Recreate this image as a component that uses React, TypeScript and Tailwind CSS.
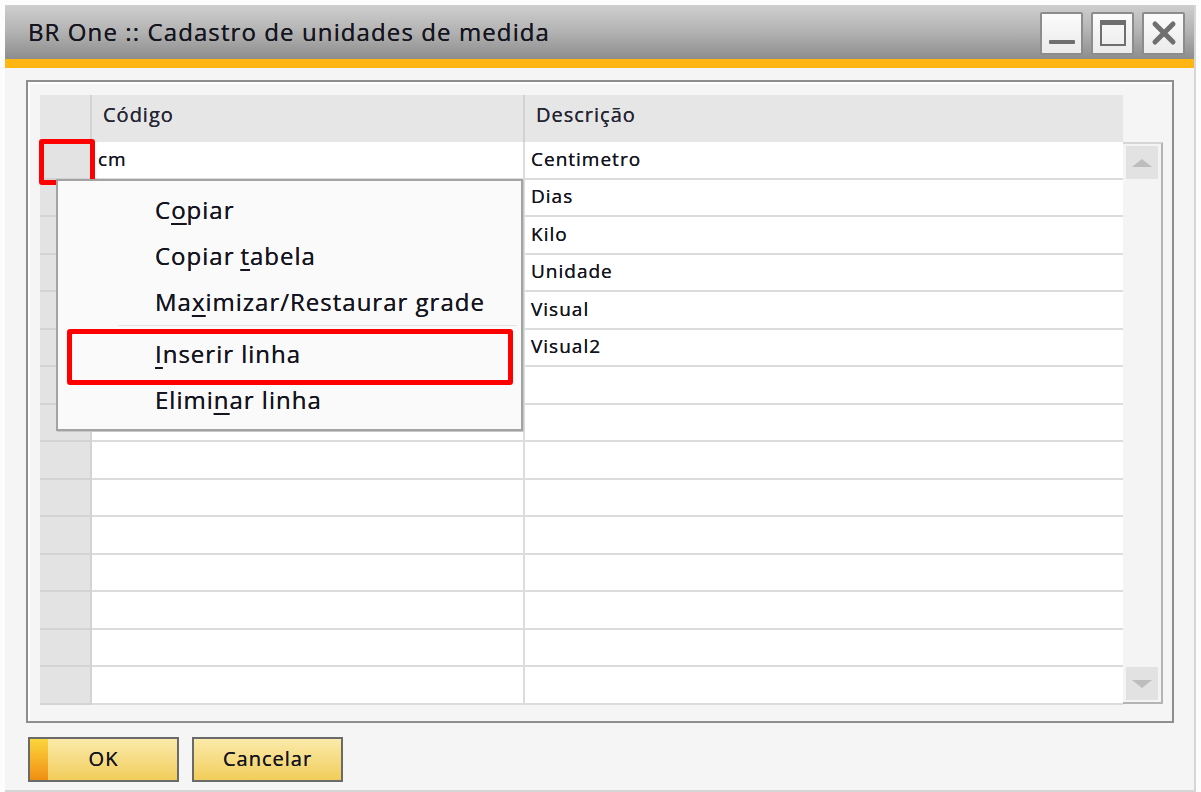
import React from "react";

const rows = [
  { code: "cm", desc: "Centimetro" },
  { code: "", desc: "Dias" },
  { code: "", desc: "Kilo" },
  { code: "", desc: "Unidade" },
  { code: "", desc: "Visual" },
  { code: "", desc: "Visual2" },
  ...Array.from({ length: 9 }, () => ({ code: "", desc: "" })),
];

const font = { fontFamily: '"Open Sans", "Noto Sans", sans-serif' };

function TitleButton({ children }: { children: React.ReactNode }) {
  return (
    <div className="flex h-[43px] w-[43px] items-center justify-center rounded-[2px] border-2 border-[#8c8c8c] bg-gradient-to-b from-[#fbfbfb] to-[#ebebeb]">
      {children}
    </div>
  );
}

function MenuItem({ children }: { children: React.ReactNode }) {
  return <div className="flex h-[46px] items-center pl-[97px]">{children}</div>;
}

export default function App() {
  return (
    <div
      className="h-[792px] w-[1201px] overflow-hidden bg-[#fdfdfd] pl-[5px] pr-[5px] pt-[5px] text-[#141420]"
      style={font}
    >
      <div className="flex h-[787px] flex-col border-b-2 border-r-2 border-[#d6d6d6]">
        {/* Title bar */}
        <div className="flex h-[54px] items-center justify-between bg-gradient-to-b from-[#cfcfcf] via-[#b2b2b2] to-[#8d8d8d] pl-[23px] pr-[9px]">
          <span className="text-[24px] tracking-[1.1px] text-[#15151f] [text-shadow:0_0_0.4px_#15151f]">
            BR One :: Cadastro de unidades de medida
          </span>
          <div className="flex gap-[8px] pt-[2px]">
            <TitleButton>
              <div className="mt-[18px] h-[4px] w-[26px] rounded-[1px] bg-[#6f6f6f]" />
            </TitleButton>
            <TitleButton>
              <div className="h-[26px] w-[26px] border-2 border-t-[5px] border-[#6f6f6f]" />
            </TitleButton>
            <TitleButton>
              <svg width="26" height="26" viewBox="0 0 26 26">
                <path d="M4 4 L22 22 M22 4 L4 22" stroke="#6f6f6f" strokeWidth="5" strokeLinecap="round" />
              </svg>
            </TitleButton>
          </div>
        </div>
        <div className="h-[9px] bg-[#fdb614]" />

        {/* Body */}
        <div className="flex flex-1 flex-col bg-[#f5f5f5] pl-[21px] pt-[12px]">
          {/* Frame */}
          <div className="h-[643px] w-[1148px] border-2 border-[#8e8e8e] shadow-[inset_2px_2px_0_#ffffff] pl-[12px] pt-[13px]">
            <div className="relative flex">
              {/* Grid */}
              <div className="w-[1083px] text-[19px] tracking-[1px] [text-shadow:0_0_0.5px_#141420]">
                <div className="flex h-[47px] bg-[#e6e6e6] text-[20px]">
                  <div className="w-[52px] border-r-2 border-[#d2d2d2]" />
                  <div className="flex w-[433px] items-center border-r-2 border-[#d2d2d2] pl-[11px] pb-[8px] text-[#262634]">
                    Código
                  </div>
                  <div className="flex flex-1 items-center pl-[11px] pb-[8px] text-[#262634]">Descrição</div>
                </div>
                {rows.map((r, i) => (
                  <div key={i} className="flex h-[37.5px]">
                    <div className="w-[52px] border-b-2 border-r-2 border-[#d3d3d3] bg-[#e3e3e3]" />
                    <div className="flex w-[433px] items-center border-b-2 border-r-2 border-[#dcdcdc] bg-white pl-[6px] pb-[2px]">
                      {r.code}
                    </div>
                    <div className="flex flex-1 items-center border-b-2 border-[#dcdcdc] bg-white pl-[6px] pb-[2px]">
                      {r.desc}
                    </div>
                  </div>
                ))}
              </div>

              {/* Scrollbar */}
              <div className="flex w-[40px] flex-col pt-[47px]">
                <div className="flex h-[562px] flex-col justify-between border-2 border-l-0 border-[#b4b4b4] border-t-[#d6d6d6] bg-[#f4f4f4] py-[2px] pl-[3px] pr-[2px]">
                  <div className="flex h-[33px] w-[32px] items-center justify-center bg-[#e2e2e2]">
                    <div className="h-0 w-0 border-x-[10px] border-b-[8px] border-x-transparent border-b-[#bdbdbd]" />
                  </div>
                  <div className="flex h-[33px] w-[32px] items-center justify-center bg-[#e2e2e2]">
                    <div className="h-0 w-0 border-x-[10px] border-t-[8px] border-x-transparent border-t-[#bdbdbd]" />
                  </div>
                </div>
              </div>

              {/* Red marker on first row header */}
              <div className="absolute left-[-1px] top-[44px] h-[46px] w-[56px] rounded-[3px] border-[5px] border-[#ff0000]" />

              {/* Context menu */}
              <div className="absolute left-[16px] top-[84px] h-[252px] w-[467px] border-2 border-[#a3a3a3] bg-[#fafafa] pt-[6px] text-[24px] tracking-[1px] shadow-[1px_1px_0_#c8c8c8] [text-shadow:0_0_0.5px_#141420]">
                <MenuItem>
                  C<u className="underline-offset-[4px]">o</u>piar
                </MenuItem>
                <MenuItem>
                  Copiar <u className="ml-[6px] underline-offset-[4px]">t</u>abela
                </MenuItem>
                <MenuItem>
                  Ma<u className="underline-offset-[4px]">x</u>imizar/Restaurar grade
                </MenuItem>
                <div className="ml-[60px] mr-[4px] h-[6px] border-t border-[#e3e3e3]" />
                <MenuItem>
                  <u className="underline-offset-[4px]">I</u>nserir linha
                </MenuItem>
                <MenuItem>
                  Elimi<u className="underline-offset-[4px]">n</u>ar linha
                </MenuItem>
                <div className="absolute left-[9px] top-[148px] h-[56px] w-[446px] rounded-[3px] border-[5px] border-[#ff0000]" />
              </div>
            </div>
          </div>

          {/* Buttons */}
          <div className="mt-[14px] flex gap-[13px] pl-[2px] text-[20px] tracking-[1px] [text-shadow:0_0_0.4px_#141420]">
            <div className="relative flex h-[45px] w-[151px] items-center justify-center border-2 border-[#6a6a6a] bg-gradient-to-b from-[#fbeaa9] to-[#f1cd58]">
              <div className="absolute bottom-0 left-0 top-0 w-[18px] bg-gradient-to-b from-[#fbd63c] to-[#ef8e10]" />
              <span className="relative pb-[2px]">OK</span>
            </div>
            <div className="flex h-[45px] w-[151px] items-center justify-center border-2 border-[#6a6a6a] bg-gradient-to-b from-[#fbeaa9] to-[#f1cd58] pb-[2px]">
              Cancelar
            </div>
          </div>
        </div>
      </div>
    </div>
  );
}
